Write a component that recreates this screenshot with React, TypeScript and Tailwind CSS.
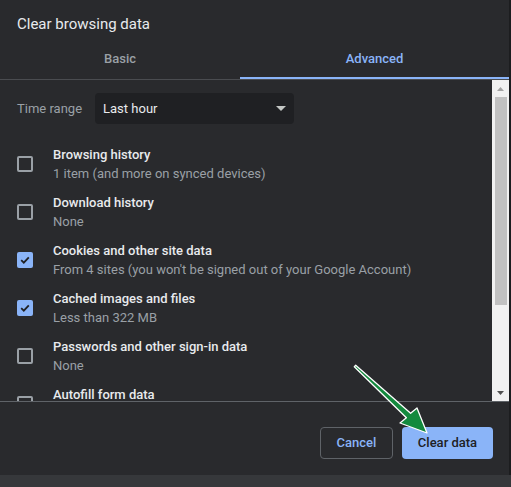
const rows = [
  { title: "Browsing history", sub: "1 item (and more on synced devices)", checked: false },
  { title: "Download history", sub: "None", checked: false },
  { title: "Cookies and other site data", sub: "From 4 sites (you won't be signed out of your Google Account)", checked: true },
  { title: "Cached images and files", sub: "Less than 322 MB", checked: true },
  { title: "Passwords and other sign-in data", sub: "None", checked: false },
  { title: "Autofill form data", sub: "None", checked: false },
];

function Checkbox({ checked }: { checked: boolean }) {
  if (checked) {
    return (
      <div className="w-4 h-4 rounded-[2px] bg-[#8ab4f8] flex items-center justify-center shrink-0">
        <svg width="12" height="12" viewBox="0 0 12 12">
          <path d="M2.2 6.2 L4.8 8.7 L9.8 3.4" fill="none" stroke="#202124" strokeWidth="1.8" />
        </svg>
      </div>
    );
  }
  return <div className="w-4 h-4 rounded-[2px] border-2 border-[#9aa0a6] shrink-0" />;
}

export default function App() {
  return (
    <div
      className="w-[511px] h-[487px] bg-[#1c1d1f] flex flex-col overflow-hidden relative"
      style={{ fontFamily: "Roboto, 'Liberation Sans', sans-serif" }}
    >
      <div className="w-[509px] h-[475px] bg-[#292a2d] flex flex-col">
        {/* header */}
        <div className="h-[44px] pl-[17px] pt-[14px] text-[15px] leading-[20px] text-[#e8eaed]">
          Clear browsing data
        </div>

        {/* tabs */}
        <div className="flex h-[36px] border-b border-[#4a4c50]">
          <div className="w-[240px] flex items-center justify-center pb-[5px] text-[13px] font-medium text-[#9aa0a6]">
            Basic
          </div>
          <div className="flex-1 flex items-center justify-center pb-[3px] text-[13px] font-medium text-[#8ab4f8] border-b-2 border-[#8ab4f8]">
            Advanced
          </div>
        </div>

        {/* scroll area */}
        <div className="h-[322px] flex border-b border-[#5f6368]">
          <div className="flex-1 overflow-hidden">
            <div className="pt-[13px] pl-[17px] flex items-center gap-[13px]">
              <span className="text-[13px] text-[#9aa0a6]">Time range</span>
              <div className="w-[199px] h-[31px] rounded bg-[#1f2023] flex items-center justify-between pl-[8px] pr-[8px]">
                <span className="text-[13px] text-[#e8eaed]">Last hour</span>
                <svg width="10" height="5" viewBox="0 0 10 5">
                  <path d="M0 0 L10 0 L5 5 Z" fill="#c4c7c5" />
                </svg>
              </div>
            </div>
            <div className="pt-[16px]">
              {rows.map((r) => (
                <div key={r.title} className="h-[48px] flex items-center pl-[17px]">
                  <Checkbox checked={r.checked} />
                  <div className="ml-[20px] flex flex-col">
                    <span className="text-[13px] leading-[19px] font-medium text-[#e8eaed]">{r.title}</span>
                    <span className="text-[13px] leading-[19px] text-[#9aa0a6]">{r.sub}</span>
                  </div>
                </div>
              ))}
            </div>
          </div>
          {/* scrollbar */}
          <div className="w-[17px] bg-[#f1f1f1] flex flex-col items-center">
            <div className="h-[17px] flex items-center justify-center">
              <svg width="7" height="4" viewBox="0 0 7 4">
                <path d="M0 4 L3.5 0 L7 4 Z" fill="#a3a3a3" />
              </svg>
            </div>
            <div className="w-[12px] h-[208px] bg-[#c1c1c1]" />
            <div className="flex-1" />
            <div className="h-[17px] flex items-center justify-center">
              <svg width="7" height="4" viewBox="0 0 7 4">
                <path d="M0 0 L7 0 L3.5 4 Z" fill="#505050" />
              </svg>
            </div>
          </div>
        </div>

        {/* footer */}
        <div className="flex-1 flex justify-end items-start pt-[25px] pr-[16px] gap-[9px]">
          <button className="w-[73px] h-[32px] rounded border border-[#5f6368] text-[13px] font-medium text-[#8ab4f8]">
            Cancel
          </button>
          <button className="w-[91px] h-[32px] rounded bg-[#8ab4f8] text-[13px] font-medium text-[#202124]">
            Clear data
          </button>
        </div>
      </div>
      <div className="flex-1 bg-[#36383b]" />

      {/* annotation arrow */}
      <svg className="absolute left-0 top-0 pointer-events-none" width="511" height="487">
        <polygon
          points="355.7,365.3 410.6,413.3 417,408 427,433 400,423 406.4,417.7 354.3,366.7"
          fill="#138a3e"
          stroke="#ffffff"
          strokeWidth="1.3"
          strokeLinejoin="round"
        />
      </svg>
    </div>
  );
}
